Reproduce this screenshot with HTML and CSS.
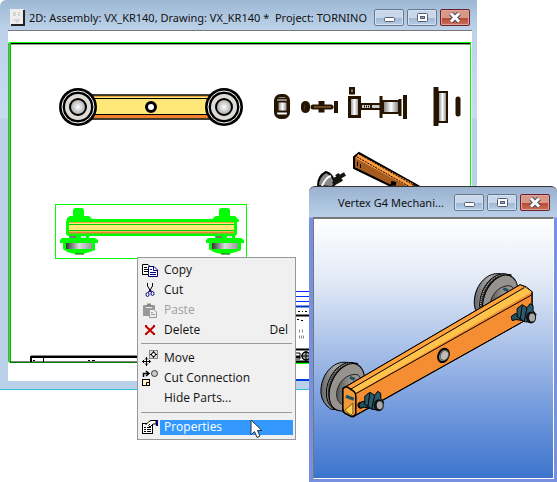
FILE: index.html
```html
<!DOCTYPE html>
<html lang="en">
<head>
  <meta charset="UTF-8">
  <title>Vertex G4</title>
  <link rel="stylesheet" href="styles.css">
</head>
<body>
  <main class="desktop">

    <!-- drawing window -->
    <section class="window drawing">
      <header class="titlebar">
        <svg class="doc-icon" viewBox="0 0 15 17" width="15" height="17">
          <path d="M0 0H14V16H0Z" fill="#eee"/>
          <path d="M14 1V16H1" fill="none" stroke="#222" stroke-width="2"/>
          <path d="M3 4h3M3 6h3M9 3v4M4 11h6M6 13h2" stroke="#bbb"/>
        </svg>
        <h1 class="title">2D: Assembly: VX_KR140, Drawing: VX_KR140 * &nbsp;Project: TORNINO</h1>
        <div class="buttons">
          <button type="button" class="wbtn" aria-label="Minimize"><svg viewBox="0 0 30 17" width="30" height="17"><rect x="10.500" y="8.500" width="10" height="4" rx="1" fill="#fff" stroke="#555e70"/></svg></button>
          <button type="button" class="wbtn" aria-label="Maximize"><svg viewBox="0 0 30 17" width="30" height="17"><rect x="10.500" y="4.500" width="10" height="8" rx="1" fill="#fff" stroke="#555e70"/><rect x="13.500" y="7.500" width="4" height="2" fill="#8fa9c8" stroke="#555e70"/></svg></button>
          <button type="button" class="wbtn close" aria-label="Close"><svg viewBox="0 0 30 17" width="30" height="17"><path d="M11 4.500L19 12.500M19 4.500L11 12.500" stroke="#4f4a58" stroke-width="5"/><path d="M11 4.500L19 12.500M19 4.500L11 12.500" stroke="#fff" stroke-width="3"/></svg></button>
        </div>
      </header>
      <svg class="sheet" viewBox="8 30 464 351" role="img" aria-label="Assembly drawing">
        <defs>
          <radialGradient id="hub"><stop offset="0" stop-color="#fff"/><stop offset="1" stop-color="#a5a5a5"/></radialGradient>
          <linearGradient id="steel"><stop offset="0" stop-color="#777"/><stop offset=".5" stop-color="#fff"/><stop offset="1" stop-color="#777"/></linearGradient>
          <linearGradient id="turned"><stop offset="0" stop-color="#333"/><stop offset=".5" stop-color="#ddd"/><stop offset="1" stop-color="#999"/></linearGradient>
          <g id="roller">
            <circle r="19" fill="#000"/>
            <circle r="16" fill="none" stroke="#fff"/>
            <circle r="13" fill="#dedbd7"/>
            <circle r="8" fill="url(#hub)" stroke="#000" stroke-width="2"/>
          </g>
          <g id="wheel">
            <rect x="-6" y="-13" width="11" height="10" rx="3" fill="#0f0"/>
            <path d="M-12 0V-3L-9 -5H10L14 -1V1Z" fill="#0f0"/>
            <circle cx="-1" cy="-9" r="1" fill="#58b8a0"/>
            <rect x="-10" y="13" width="20" height="6" fill="#0f0"/>
            <rect x="-9" y="14" width="6" height="3" fill="#777"/>
            <rect x="2" y="14" width="5" height="3" fill="#ddd"/>
            <path d="M-17 17H16L19 19V22H16V29Q12 31 3 33H-3Q-12 32 -16 28V22H-19V19Z" fill="#0f0"/>
            <rect x="-13" y="22" width="26" height="6" fill="url(#turned)"/>
            <path d="M-4 33H5" stroke="#151"/>
          </g>
        </defs>
        <rect x="8" y="30" width="464" height="351" fill="#fff"/>
        <path d="M8 30.500H472" stroke="#777"/>
        <path d="M8.500 43V362" stroke="#888"/>
        <rect x="9.500" y="42.500" width="461" height="320" fill="none" stroke="#0f0" stroke-width="1"/>
        <path d="M10.500 362V43.500H470" fill="none" stroke="#00c800"/>
        <path d="M11 43.500H470M10 362H470" stroke="#000"/>
        <path d="M11 44.500H470" stroke="#999"/>

        <!-- top view of the beam -->
        <rect x="78" y="95" width="146" height="24" fill="#ffe878" stroke="#000" stroke-width="1.500"/>
        <path d="M90 96.500H212" stroke="#e8a040"/>
        <path d="M90 98.500H212M90 114.500H212" stroke="#000"/>
        <path d="M90 116.500H212" stroke="#f08030" stroke-width="3"/>
        <circle cx="151" cy="107" r="4.500" fill="#fff" stroke="#000" stroke-width="3"/>
        <use href="#roller" x="78" y="107"/>
        <use href="#roller" x="224" y="107"/>

        <!-- exploded parts -->
        <g stroke="#241400" stroke-width="2">
          <rect x="275.500" y="95.500" width="13" height="22" rx="5" fill="#fff" stroke-width="3"/>
          <rect x="277.500" y="101.500" width="10" height="10" fill="url(#steel)"/>
          <path d="M277 98.500h11M277 115.500h11"/>
          <rect x="302.500" y="102.500" width="6" height="9" rx="3" fill="#555" stroke-width="3"/>
          <path d="M306 102v10" stroke-width="3"/>
          <path d="M313 107H331" stroke-width="5" stroke-linecap="round"/>
          <path d="M321.500 101V112.500" stroke-width="6"/>
          <path d="M314 107H331" stroke="#6b4a20"/>
          <path d="M336 101V113" stroke-width="4"/>
          <path d="M352 87V94.500" stroke-width="6"/>
          <path d="M352 89.500V92" stroke="#876"/>
          <rect x="349.500" y="97.500" width="10" height="19" fill="url(#steel)" stroke-width="3"/>
          <rect x="361" y="104" width="20" height="5" fill="#ccc"/>
          <path d="M364 106.500h6" stroke-dasharray="1 1"/>
          <path d="M371 104v5"/>
          <rect x="383" y="101" width="16" height="12" fill="url(#steel)" stroke-width="2"/>
          <path d="M381 96V118M400 99V116" stroke-width="3"/>
          <path d="M405 95V119" stroke-width="4"/>
          <rect x="438" y="92" width="9" height="30" fill="url(#steel)" stroke-width="2"/>
          <path d="M436 87V126" stroke-width="5"/>
          <path d="M458 99V114" stroke-width="5" stroke-linecap="round"/>
        </g>

        <!-- exploded isometric -->
        <path d="M354 157L359 153L420 187H393L354 168Z" fill="#a45c20" stroke="#000" stroke-width="2"/>
        <path d="M357 156L412 186" stroke="#ff9c40" stroke-width="5"/>
        <path d="M357 157L410 187M359 154L417 187" stroke="#000" stroke-dasharray="2 1"/>
        <path d="M357 164h1M360 166h1M391 183l5 1" stroke="#000" stroke-width="4"/>
        <path d="M318 186Q318 176 326 172Q333 174 335 184L332 187Z" fill="#888" stroke="#000" stroke-width="2"/>
        <path d="M322 186Q326 177 331 176" fill="none" stroke="#fff" stroke-width="2"/>
        <path d="M334 180L345 174M333 184L342 179M337 174l3 5" stroke="#181410" stroke-width="4"/>

        <!-- selected side view -->
        <rect x="55.500" y="204.500" width="191" height="54" fill="none" stroke="#0f0"/>
        <use href="#wheel" x="79" y="221"/>
        <use href="#wheel" x="225" y="221"/>
        <rect x="66" y="219" width="171" height="17" rx="3" fill="#0f0"/>
        <rect x="69" y="222" width="165" height="11" fill="#ffe878"/>
        <path d="M69 222.500H234" stroke="#f0a040"/>
        <path d="M69 224.500H234M69 230.500H234" stroke="#00d000"/>
        <path d="M69 232.500H234" stroke="#f08040" stroke-width="2"/>

        <!-- title block -->
        <path d="M31 362V357H300" fill="none" stroke="#000" stroke-width="2"/>
        <path d="M31 355.500H300" stroke="#888"/>
        <path d="M43.500 357V362M33 360.500h2M88 360.500h2M92 360.500h3" stroke="#000"/>
        <path d="M290 291.500H310M290 296.500H310M290 301.500H310" stroke="#0030ff"/>
        <path d="M290 306.500H310" stroke="#0030c8" stroke-width="2"/>
        <path d="M290 315.500H310M290 349.500H310M290 361.500H310" stroke="#000" stroke-width="2"/>
        <path d="M298 311.500h2M302 311.500h1M305 311.500h2M297 319.500h2M301 320.500h2" stroke="#000"/>
        <path d="M299 331h2M302 331h2M299 337h5" stroke="#888" stroke-width="3" stroke-dasharray="1 1"/>
        <path d="M296 353h4v6h-4" fill="none" stroke="#000"/>
        <circle cx="306" cy="356" r="4" fill="#aaa" stroke="#000" stroke-width="1.500"/>
        <path d="M301 356h9M306 351v10" stroke="#000"/>
        <path d="M290 363.500H310" stroke="#0f0"/>
        <path d="M290 380H310" stroke="#0040e0" stroke-width="2"/>
      </svg>
    </section>

    <!-- 3D model window -->
    <section class="window model">
      <header class="titlebar">
        <h2 class="title">Vertex G4 Mechani...</h2>
        <div class="buttons">
          <button type="button" class="wbtn" aria-label="Minimize"><svg viewBox="0 0 30 17" width="30" height="17"><rect x="10.500" y="8.500" width="10" height="4" rx="1" fill="#fff" stroke="#555e70"/></svg></button>
          <button type="button" class="wbtn" aria-label="Maximize"><svg viewBox="0 0 30 17" width="30" height="17"><rect x="10.500" y="4.500" width="10" height="8" rx="1" fill="#fff" stroke="#555e70"/><rect x="13.500" y="7.500" width="4" height="2" fill="#8fa9c8" stroke="#555e70"/></svg></button>
          <button type="button" class="wbtn close" aria-label="Close"><svg viewBox="0 0 30 17" width="30" height="17"><path d="M11 4.500L19 12.500M19 4.500L11 12.500" stroke="#4f4a58" stroke-width="5"/><path d="M11 4.500L19 12.500M19 4.500L11 12.500" stroke="#fff" stroke-width="3"/></svg></button>
        </div>
      </header>
      <svg class="view" viewBox="314 218 240 260" role="img" aria-label="3D model">
        <defs>
          <linearGradient id="rim"><stop offset="0" stop-color="#666"/><stop offset=".4" stop-color="#aaa"/><stop offset="1" stop-color="#777"/></linearGradient>
          <linearGradient id="shade"><stop offset="0" stop-color="#555"/><stop offset=".5" stop-color="#979390"/></linearGradient>
          <g id="disc">
            <path d="M-22 8C-23 -10 -10 -25 4 -23L15 -22L0 25L-12 24Q-21 18 -22 8Z" fill="url(#rim)" stroke="#000"/>
            <ellipse cx="2" cy="1" rx="17" ry="25" fill="#333" stroke="#000" transform="rotate(24 2 1)"/>
            <ellipse cx="2" cy="1" rx="16" ry="24" fill="none" stroke="#ccc" stroke-dasharray="1 1" transform="rotate(24 2 1)"/>
            <ellipse cx="4" cy="2" rx="16" ry="25" fill="#96928f" stroke="#000" transform="rotate(24 4 2)"/>
            <path d="M-1 19C-12 14 -5 -10 12 -11L20 -6L12 15Z" fill="url(#shade)"/>
            <path d="M-1 19C-12 14 -5 -10 12 -11Q17 -11 18 -6" fill="none" stroke="#222"/>
            <path d="M7 -8l5 2" stroke="#24505e" stroke-width="3"/>
          </g>
          <g id="bolt">
            <path d="M-15 3l4 -3l6 2l1 5l-6 -1l-4 1Z" fill="#24505e" stroke="#000"/>
            <path d="M-9 -5L-4 -9L1 -6L4 -10L7 -8L7 -3L10 1L6 9L-2 8L-9 3Z" fill="#2c5a6a" stroke="#000"/>
            <path d="M-4 -8L-6 6M1 -6L-2 8" stroke="#000"/>
            <ellipse cx="5" cy="4" rx="5" ry="6" fill="#111"/>
            <ellipse cx="6" cy="4" rx="3" ry="4" fill="#aaa"/>
          </g>
        </defs>
        <use href="#disc" x="343" y="385"/>
        <use href="#disc" x="497" y="296"/>
        <path d="M343 388L521 284L533 291V316L352 417L343 412Z" fill="#f58e32" stroke="#000"/>
        <path d="M345 387L521 284L533 291L357 391L352 394Z" fill="#ffa23c"/>
        <path d="M351 389L526 287L533 291L357 392Z" fill="#ffc24a"/>
        <path d="M345 387L521 284L527 286L533 291V316L353 417" fill="none" stroke="#000"/>
        <path d="M349 390L525 287M355 394L533 294" stroke="#000"/>
        <path d="M343 389Q344 386 348 387L354 391Q356 393 356 396V413Q355 417 351 416L345 413Q343 411 343 408Z" fill="#f0983a" stroke="#000" stroke-width="1.500"/>
        <path d="M345 410L353 403V413L351 415Z" fill="#ffd050" stroke="#000" stroke-width=".5"/>
        <path d="M346 396L354 399" stroke="#24505e" stroke-width="3"/>
        <ellipse cx="444" cy="355" rx="5" ry="7" fill="#999" stroke="#000" stroke-width="2" transform="rotate(25 444 355)"/>
        <ellipse cx="445" cy="355" rx="4" ry="5" fill="#bbb" stroke="#554" transform="rotate(25 445 355)"/>
        <circle cx="361" cy="405" r="3" fill="#24505e" stroke="#000"/>
        <use href="#bolt" x="374" y="401"/>
        <use href="#bolt" x="527" y="313"/>
      </svg>
    </section>

    <!-- context menu -->
    <menu class="menu">
      <li><button type="button" class="item">
        <svg class="icon" viewBox="0 0 16 16" width="16" height="16"><path d="M.5 2.500H6L8.500 5V12.500H.5Z" fill="#fff" stroke="#000"/><path d="M2 5.500h3M2 7.500h4M2 9.500h4" stroke="#000"/><path d="M6.500 4.500H12L15.500 8V14.500H6.500Z" fill="#fff" stroke="#000080"/><path d="M11.500 5V8.500H15M8 7.500h2M8 10.500h6M8 12.500h6" fill="none" stroke="#000080"/></svg>
        <span>Copy</span></button></li>
      <li><button type="button" class="item">
        <svg class="icon" viewBox="0 0 16 16" width="16" height="16"><path d="M5.500 1V4L9 10M10.500 1V4L7 10" fill="none" stroke="#000"/><ellipse cx="5.500" cy="12.500" rx="1.500" ry="2" fill="none" stroke="#000080"/><ellipse cx="10.500" cy="11.500" rx="1.500" ry="2" fill="none" stroke="#000080"/><path d="M6 10.500L8 8L10 9.500" fill="none" stroke="#000080"/></svg>
        <span>Cut</span></button></li>
      <li><button type="button" class="item" disabled>
        <svg class="icon" viewBox="0 0 16 16" width="16" height="16"><rect x="1" y="3" width="12" height="11" rx="1" fill="#999"/><path d="M4 4.500H10M5 2.500H9" stroke="#888" stroke-width="2"/><path d="M4 5.500h6" stroke="#eee"/><path d="M7.500 7.500H12L14.500 10V15.500H7.500Z" fill="#eee" stroke="#999"/><path d="M9 10.500h2M9 12.500h4" stroke="#999"/></svg>
        <span>Paste</span></button></li>
      <li><button type="button" class="item">
        <svg class="icon" viewBox="0 0 16 16" width="16" height="16"><path d="M3.500 4L12.500 12.500M12.500 4L3.500 12.500" stroke="#c00000" stroke-width="2"/><path d="M3 4H5M11 4H13M3 12H5M11 12H13" stroke="#c00000" stroke-width="2"/></svg>
        <span>Delete</span><kbd>Del</kbd></button></li>
      <li class="line"></li>
      <li><button type="button" class="item">
        <svg class="icon" viewBox="0 0 16 16" width="16" height="16"><rect x="7.500" y=".5" width="8" height="8" fill="#ddd" stroke="#888"/><circle cx="11.500" cy="4.500" r="2" fill="#fff" stroke="#000"/><path d="M11.500 1v2M11.500 6v2M8 4.500h2M13 4.500h2M0 11.500H9M4.500 7V16M3 9.500L4.500 8L6 9.500M3 13.500L4.500 15L6 13.500M2 10L.5 11.500L2 13M7 10L8.500 11.500L7 13" fill="none" stroke="#000"/></svg>
        <span>Move</span></button></li>
      <li><button type="button" class="item">
        <svg class="icon" viewBox="0 0 16 16" width="16" height="16"><path d="M1.500 7V3.500H6M4 1L7 3.500L4 6" fill="none" stroke="#000" stroke-width="1.500"/><circle cx="12.500" cy="3.500" r="3" fill="#ccc" stroke="#333"/><rect x=".5" y="9.500" width="7" height="6" fill="#fff4c8" stroke="#000"/><path d="M4.500 15V12.500H7" fill="none" stroke="#000"/></svg>
        <span>Cut Connection</span></button></li>
      <li><button type="button" class="item">
        <svg class="icon" viewBox="0 0 16 16" width="16" height="16"></svg>
        <span>Hide Parts...</span></button></li>
      <li class="line"></li>
      <li><button type="button" class="item active">
        <svg class="icon" viewBox="0 0 16 16" width="16" height="16"><rect x=".5" y="4.500" width="10" height="10" fill="#fff" stroke="#000"/><path d="M2 8.500h2M5 8.500h4M2 10.500h2M5 10.500h4M2 12.500h2M5 12.500h4" stroke="#000"/><path d="M3.500 6L7 2.500L9 1.500H14V5H11L8 8L6.500 6.500L8 5" fill="#fff" stroke="#000"/><path d="M15 1V7" stroke="#000080" stroke-width="2"/></svg>
        <span>Properties</span></button></li>
      <li class="pointer">
        <svg viewBox="0 0 13 20" width="13" height="20"><path d="M1 1V16L4.500 12.500L7 18.500L10 17L7.500 11.500H12Z" fill="#fff" stroke="#234"/></svg>
      </li>
    </menu>

  </main>
</body>
</html>
```
FILE: styles.css
```css
* {
  box-sizing: border-box;
}
body {
  margin: 0;
  background-color: #fff;
  font-family: "Open Sans", "Noto Sans", sans-serif;
  font-size: 12px;
  color: #111;
}
.desktop {
  position: relative;
  min-height: 100vh;
  overflow: hidden;
}
.window {
  position: absolute;
}
.drawing {
  top: 0;
  left: 0;
  right: 80px;
  padding: 0 5px 8px 8px;
  background: linear-gradient(#9db8d4, #bdd2ea 30px, #c8dcf0 118px, #bad0e8 119px, #bad0e8);
  border-bottom: 1px solid #30c0e0;
  border-top-left-radius: 6px;
}
.model {
  top: 186px;
  left: 309px;
  right: 0;
  padding: 0 3px 3px 4px;
  background: linear-gradient(#9ab2d0, #b9cfe8 30px, #7890e0 31px, #7890e0);
  border-top: 1px solid #333;
  border-radius: 6px 6px 0 0;
}
.titlebar {
  display: flex;
  align-items: center;
  height: 30px;
}
.drawing .titlebar {
  padding: 4px 0 0 2px;
}
.doc-icon {
  flex: none;
}
.title {
  flex: 1;
  min-width: 0;
  margin: 0;
  padding-left: 4px;
  font-family: "Noto Sans", "Open Sans", sans-serif;
  font-size: 11px;
  font-weight: normal;
  white-space: nowrap;
}
.model .title {
  padding-left: 25px;
}
.buttons {
  display: flex;
  gap: 3px;
  padding-right: 4px;
}
.drawing .buttons {
  padding-right: 2px;
}
.wbtn {
  width: 30px;
  height: 17px;
  padding: 0;
  border: 0;
  border-radius: 2px;
  outline: 1px solid #66788f;
  outline-offset: -1px;
  background: linear-gradient(#c8d8ea 50%, #9eb6d2 50%, #b8d0e8);
  box-shadow: inset 0 0 0 2px #d4e2f0;
}
.wbtn svg {
  display: block;
}
.close {
  outline-color: #6a2030;
  background: linear-gradient(#d89888 50%, #b84430 50%, #cc7860);
  box-shadow: inset 0 0 0 2px #dca498;
}
.sheet, .view {
  display: block;
  width: 100%;
}
.view {
  border-top: 2px solid #777;
  border-left: 1px solid #777;
  border-right: 1px solid #fff;
  border-bottom: 1px solid #fff;
  background: linear-gradient(#fff, #e0e8f6 25%, #a8c0e8 50%, #7098dc 75%, #3c74cc);
}
.menu {
  position: absolute;
  top: 257px;
  left: 137px;
  width: 159px;
  margin: 0;
  padding: 2px;
  list-style: none;
  background-color: #f0f0f0;
  border: 1px solid #979797;
}
.item {
  display: flex;
  align-items: center;
  width: 100%;
  height: 20px;
  padding: 0 5px 0 2px;
  border: 0;
  background: none;
  font: inherit;
  color: #111;
  text-align: left;
}
.item:disabled {
  color: #a0a0a0;
}
.icon {
  flex: none;
  margin-right: 2px;
}
.item span, .item kbd {
  padding-bottom: 2px;
  font: inherit;
  line-height: 13px;
}
.item span {
  flex: 1;
  padding-left: 4px;
}
.line {
  height: 1px;
  margin: 3px 1px 4px;
  background-color: #999;
}
.menu .line ~ .line {
  margin: 4px 1px;
}
.active {
  padding-right: 0;
}
.active span {
  color: #fff;
  background-color: #3399ff;
}
.pointer {
  position: absolute;
  top: 161px;
  left: 112px;
}
.pointer svg {
  display: block;
}
```
